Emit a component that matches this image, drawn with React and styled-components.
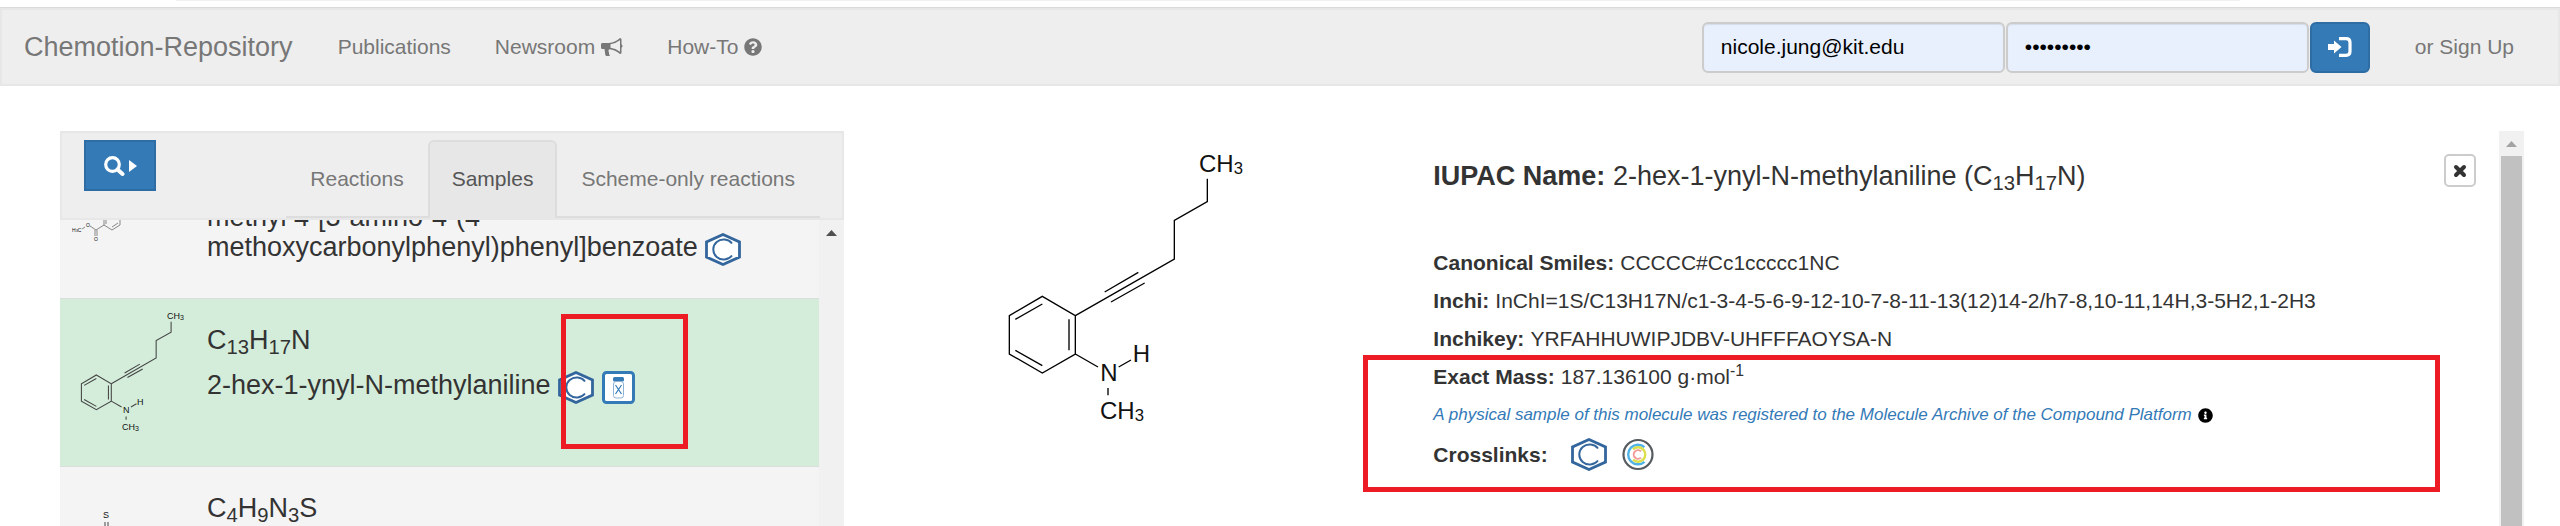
import React, { useLayoutEffect, useRef } from "react";
import styled, { createGlobalStyle } from "styled-components";
import { FaInfoCircle, FaQuestionCircle } from "react-icons/fa";

const GlobalStyle = createGlobalStyle`
  * { box-sizing: border-box; }
  body {
    margin: 0;
    background: #fff;
    color: #333;
    font-family: "Liberation Sans", Arial, sans-serif;
    font-size: 21px;
    line-height: 30px;
  }
  sub, sup { font-size: 75%; line-height: 0; position: relative; vertical-align: baseline; }
  sub { bottom: -0.25em; }
  sup { top: -0.5em; }
`;

const Page = styled.div`
  display: flex;
  flex-direction: column;
  height: 100vh;
  overflow: hidden;
`;

const TopStrip = styled.div`
  flex: none;
  height: 8px;
  padding: 0 320px 0 176px;
  border-bottom: 1px solid #dadada;
  &::before {
    content: "";
    display: block;
    height: 1px;
    background: #f1f1f1;
  }
`;

const Navbar = styled.nav`
  flex: none;
  display: flex;
  align-items: center;
  height: 78px;
  padding: 0 44px 0 22px;
  background: #eee;
  border: 2px solid #e7e7e7;
`;

const NavLink = styled.a`
  display: inline-flex;
  align-items: center;
  gap: 6px;
  color: #777;
  text-decoration: none;
  white-space: nowrap;
  font-size: ${(p) => (p.$brand ? 27 : 21)}px;
`;

const NavLinks = styled.div`
  display: flex;
  gap: 44px;
  margin-left: 45px;
`;

const LoginForm = styled.form`
  display: flex;
  gap: 1px;
  margin: 0 45px 0 auto;
`;

const LoginInput = styled.input`
  width: 303px;
  height: 51px;
  padding: 0 17px;
  border: 2px solid #ccc;
  border-radius: 6px;
  background: #e8f0fe;
  box-shadow: inset 0 1px 1px rgba(0, 0, 0, 0.08);
  color: #000;
  font: 21px "Liberation Sans", Arial, sans-serif;
`;

const PrimaryButton = styled.button`
  display: flex;
  align-items: center;
  justify-content: center;
  gap: 4px;
  width: ${(p) => p.$width}px;
  height: 51px;
  padding: 0;
  border: 2px solid #2e6da4;
  border-radius: ${(p) => (p.$square ? 0 : 6)}px;
  background: #337ab7;
  color: #fff;
`;

const Content = styled.main`
  flex: 1;
  min-height: 0;
  display: grid;
  grid-template-columns: 7fr 15fr;
  grid-template-rows: minmax(0, 1fr);
  padding: 45px 36px 0 60px;
`;

const ListPanel = styled.section`
  display: flex;
  flex-direction: column;
  min-height: 0;
  background: #f4f4f4;
`;

const PanelHeader = styled.header`
  flex: none;
  display: flex;
  justify-content: space-between;
  align-items: flex-start;
  height: 89px;
  padding: 7px 22px 0;
  background: #eee;
  border: 2px solid #e7e7e7;
`;

const Tabs = styled.div`
  display: flex;
  height: 78px;
  padding-right: 1px;
  border-bottom: 2px solid #ddd;
`;

const Tab = styled.button`
  height: 78px;
  padding: 0 22px 2px;
  border: 2px solid ${(p) => (p.$active ? "#ddd" : "transparent")};
  border-bottom: 0;
  border-radius: 6px 6px 0 0;
  background: ${(p) => (p.$active ? "#e7e7e7" : "none")};
  color: ${(p) => (p.$active ? "#555" : "#777")};
  font: 21px "Liberation Sans", Arial, sans-serif;
  white-space: nowrap;
`;

const ScrollArea = styled.div`
  flex: 1;
  min-height: 0;
  display: grid;
  grid-template-columns: minmax(0, 1fr) 25px;
  grid-template-rows: minmax(0, 1fr);
`;

const MoleculeList = styled.ul`
  margin: 0;
  padding: 0;
  overflow: hidden;
  list-style: none;
`;

const MoleculeRow = styled.li`
  display: grid;
  grid-template-columns: 135px minmax(0, 1fr);
  height: 168px;
  padding: 0 60px 0 12px;
  border-top: 1px solid #ddd;
  background: ${(p) => (p.$selected ? "#d4edda" : "#f4f4f4")};
`;

const Thumb = styled.svg`
  display: block;
  width: 135px;
  height: 167px;
  fill: none;
  stroke: #444;
  stroke-width: 1;
  text {
    fill: #111;
    stroke: none;
    font: ${(p) => p.$label || 9}px "Liberation Sans", Arial, sans-serif;
  }
`;

const RowText = styled.div`
  padding-top: 26px;
  font-size: 27px;
  line-height: 30px;
`;

const Formula = styled.div`
  margin-bottom: 15px;
`;

const IconSlot = styled.span`
  position: relative;
  display: inline-flex;
  gap: 8px;
  height: 33px;
  margin: -3px 0 -10px 7px;
  vertical-align: -10px;
`;

const Scrollbar = styled.div`
  display: flex;
  flex-direction: column;
  align-items: center;
  background: #f1f1f1;
`;

const ScrollArrow = styled.svg`
  flex: none;
  display: block;
  width: 25px;
  height: 25px;
  fill: ${(p) => p.$color};
`;

const ScrollThumb = styled.div`
  flex: 1;
  width: 21px;
  background: #c1c1c1;
`;

const Highlight = styled.span`
  position: absolute;
  border: 5px solid #ed1c24;
  pointer-events: none;
`;

const IconHighlight = styled(Highlight)`
  top: -57px;
  left: 3px;
  width: 127px;
  height: 135px;
`;

const DetailHighlight = styled(Highlight)`
  top: -7px;
  left: -70px;
  right: 36px;
  height: 137px;
`;

const DetailPane = styled.section`
  display: grid;
  grid-template-columns: minmax(0, 1fr) 25px;
  grid-template-rows: minmax(0, 1fr);
  min-height: 0;
`;

const Detail = styled.article`
  display: grid;
  grid-template-columns: 13fr 23fr;
  padding-right: 23px;
  overflow: hidden;
`;

const Structure = styled.svg`
  display: block;
  width: 360px;
  height: 340px;
  margin: -11px auto 0;
  fill: none;
  stroke: #000;
  stroke-width: 4;
  text {
    fill: #111;
    stroke: none;
    font: 72px "Liberation Sans", Arial, sans-serif;
  }
`;

const Facts = styled.div`
  padding-top: 23px;
  white-space: nowrap;
`;

const FactsHeader = styled.div`
  display: flex;
  justify-content: space-between;
  align-items: flex-start;
  height: 94px;
`;

const Title = styled.h4`
  margin: 7px 0 0;
  font-size: 27px;
  line-height: 30px;
  font-weight: 400;
`;

const CloseButton = styled.button`
  display: flex;
  align-items: center;
  justify-content: center;
  width: 32px;
  height: 33px;
  padding: 0;
  border: 2px solid #ccc;
  border-radius: 5px;
  background: #fff;
  color: #333;
`;

const Fact = styled.div`
  display: flex;
  align-items: center;
  gap: 6px;
  height: ${(p) => p.$height || 30}px;
  margin-bottom: 8px;
`;

const FactGroup = styled.div`
  position: relative;
`;

const ArchiveLink = styled.a`
  color: #337ab7;
  font-size: 17px;
  font-style: italic;
  text-decoration: none;
`;

const InfoIcon = styled(FaInfoCircle)`
  color: #000;
`;

const Crosslinks = styled.span`
  display: flex;
  gap: 15px;
  margin-left: 17px;
`;

function PubchemHex() {
  return (
    <svg width="36" height="33" viewBox="0 0 36 33" fill="none">
      <path d="M18 1.500 L34.500 9 V24 L18 31.500 L1.500 24 V9 Z" fill="#fff" stroke="#33669c" strokeWidth="2.800" />
      <path d="M27 10.500 A10.400 10 0 1 0 27 22.500" stroke="#33669c" strokeWidth="2" />
    </svg>
  );
}

function VialIcon() {
  return (
    <svg width="33" height="33" viewBox="0 0 33 33" fill="none">
      <rect x="1.500" y="1.500" width="30" height="30" rx="3" fill="#fff" stroke="#337ab7" strokeWidth="3" />
      <rect x="11" y="6" width="11" height="4.500" rx="1.500" fill="#337ab7" />
      <rect x="11.500" y="10.500" width="10" height="16.500" rx="2.500" stroke="#8db4d8" />
      <path d="M13.500 14 L19.500 23 M19.500 14 L13.500 23" stroke="#337ab7" strokeWidth="1.200" />
    </svg>
  );
}

function RingsIcon() {
  return (
    <svg width="32" height="33" viewBox="0 0 32 33" fill="none">
      <circle cx="16" cy="16.500" r="14.500" fill="#fff" stroke="#555b5e" strokeWidth="2.200" />
      <path d="M22.500 9.200 A9.800 9.800 0 1 0 22.500 23.800" stroke="#4fb3e8" strokeWidth="2.400" />
      <path d="M11 11.400 A7.200 7.200 0 1 1 11 21.600" stroke="#dbe04a" strokeWidth="2.400" />
      <path d="M19 13.400 A4.300 4.300 0 1 0 19 19.600" stroke="#f59a9a" strokeWidth="2" />
    </svg>
  );
}

function Bullhorn() {
  return (
    <svg width="22" height="20" viewBox="0 0 22 20" fill="#777">
      <path d="M1 6 Q0 6 0 7.500 V10.500 Q0 12 1.500 12 H3.500 Q4 16 4.500 18.500 Q6 19.500 9 18.800 Q7.500 17 8 15.500 Q6.800 14 8 12.200 Q14.500 12.800 19 17 Q20.500 17 20.500 15.500 V10.700 Q21.500 10 21.500 9 T20.500 7.300 V2.500 Q20.500 1 19 1 Q14 5.600 8 6 Z M19 3.300 V14.700 Q14.500 11.300 9.500 10.800 V7.200 Q14.500 6.700 19 3.300 Z" fillRule="evenodd" />
    </svg>
  );
}

function SignInIcon() {
  return (
    <svg width="24" height="20" viewBox="0 0 24 20">
      <path d="M11 1.700 H18 Q22 1.700 22 5.500 V14.500 Q22 18.300 18 18.300 H11" fill="none" stroke="#fff" strokeWidth="3.200" />
      <path d="M0 7 H6 V3.500 L13.500 10 L6 16.500 V13 H0 Z" fill="#fff" />
    </svg>
  );
}

function SearchIcon() {
  return (
    <svg width="21" height="20" viewBox="0 0 21 20" fill="none" stroke="#fff">
      <circle cx="8.500" cy="8.500" r="6.800" strokeWidth="3.200" />
      <path d="M13.500 13.500 L18.500 18" strokeWidth="4" strokeLinecap="round" />
    </svg>
  );
}

function CloseIcon() {
  return (
    <svg width="14" height="14" viewBox="0 0 14 14" stroke="#333" strokeWidth="4" strokeLinecap="round">
      <path d="M3 3 L11 11 M11 3 L3 11" />
    </svg>
  );
}

/* Bonds of 2-hex-1-ynyl-N-methylaniline on a 1080 x 1020 grid. */
function AnilineDrawing() {
  return (
    <>
      <path d="M745 176 V245 L646 301 V417 L349 587 M437 516 L538 457 M456 546 L557 489" />
      <path d="M250 529 L349 587 V702 L250 759 L151 702 V587 Z M250 552 L169 598 M330 598 V691 M250 737 L169 691" />
      <path d="M349 702 L417 741 M479 741 L516 720 M447 804 V826" />
    </>
  );
}

function MainStructure() {
  return (
    <Structure viewBox="0 0 1080 1020" role="img" aria-label="Structure of 2-hex-1-ynyl-N-methylaniline">
      <AnilineDrawing />
      <text x="720" y="157">CH<tspan dy="5" fontSize="50">3</tspan></text>
      <text x="424" y="782">N</text>
      <text x="521" y="726">H</text>
      <text x="423" y="896">CH<tspan dy="8" fontSize="50">3</tspan></text>
    </Structure>
  );
}

function SelectedThumb() {
  return (
    <Thumb viewBox="72 299 135 167">
      <g transform="translate(58.600 295.100) scale(0.151)" strokeWidth="7">
        <AnilineDrawing />
      </g>
      <text x="167" y="319">CH<tspan dy="1" fontSize="7">3</tspan></text>
      <text x="123" y="413">N</text>
      <text x="137" y="405">H</text>
      <text x="122" y="430">CH<tspan dy="1" fontSize="7">3</tspan></text>
    </Thumb>
  );
}

function BenzoateThumb() {
  return (
    <Thumb $label={5} viewBox="72 131 135 167">
      <path d="M82 229 L85 227 M90 226 L96 230 M95 230 V236 M97 230 V236 M96 230 L104 225 V218 M106 224 V218 M104 225 L112 230 L120 225 V218 M112 227 L118 223" stroke="#888" />
      <text x="72" y="232">H<tspan fontSize="4">3</tspan>C</text>
      <text x="86" y="227">O</text>
      <text x="94" y="241">O</text>
    </Thumb>
  );
}

function ThioThumb() {
  return (
    <Thumb viewBox="72 467 135 167">
      <path d="M105 522 V540 M108 522 V540" />
      <text x="103" y="518">S</text>
    </Thumb>
  );
}

function UpArrow({ color }) {
  return (
    <ScrollArrow $color={color} viewBox="0 0 25 25">
      <path d="M7 16 L12.500 10 L18 16 Z" />
    </ScrollArrow>
  );
}

function SampleList() {
  const list = useRef(null);
  useLayoutEffect(() => {
    list.current.scrollTop = 90;
  }, []);
  return (
    <MoleculeList ref={list}>
      <MoleculeRow>
        <BenzoateThumb />
        <RowText>
          <Formula>C<sub>16</sub>H<sub>15</sub>NO<sub>4</sub></Formula>
          methyl 4-[3-amino-4-(4-<br />
          methoxycarbonylphenyl)phenyl]benzoate
          <IconSlot><PubchemHex /></IconSlot>
        </RowText>
      </MoleculeRow>
      <MoleculeRow $selected>
        <SelectedThumb />
        <RowText>
          <Formula>C<sub>13</sub>H<sub>17</sub>N</Formula>
          2-hex-1-ynyl-N-methylaniline
          <IconSlot>
            <PubchemHex />
            <VialIcon />
            <IconHighlight />
          </IconSlot>
        </RowText>
      </MoleculeRow>
      <MoleculeRow>
        <ThioThumb />
        <RowText>
          <Formula>C<sub>4</sub>H<sub>9</sub>N<sub>3</sub>S</Formula>
        </RowText>
      </MoleculeRow>
    </MoleculeList>
  );
}

export default function App() {
  return (
    <Page>
      <GlobalStyle />
      <TopStrip />
      <Navbar>
        <NavLink $brand href="#home">Chemotion-Repository</NavLink>
        <NavLinks>
          <NavLink href="#publications">Publications</NavLink>
          <NavLink href="#newsroom">Newsroom <Bullhorn /></NavLink>
          <NavLink href="#howto">How-To <FaQuestionCircle size={18} /></NavLink>
        </NavLinks>
        <LoginForm>
          <LoginInput type="email" aria-label="Email" defaultValue="nicole.jung@kit.edu" />
          <LoginInput type="password" aria-label="Password" defaultValue="chemistry" />
          <PrimaryButton $width={60} type="button" aria-label="Log in"><SignInIcon /></PrimaryButton>
        </LoginForm>
        <NavLink href="#signup">or Sign Up</NavLink>
      </Navbar>
      <Content>
        <ListPanel>
          <PanelHeader>
            <PrimaryButton $width={72} $square type="button" aria-label="Search">
              <SearchIcon />
              <svg width="8" height="12" viewBox="0 0 8 12" fill="#fff"><path d="M0 0 L8 6 L0 12 Z" /></svg>
            </PrimaryButton>
            <Tabs role="tablist">
              <Tab role="tab">Reactions</Tab>
              <Tab role="tab" aria-selected="true" $active>Samples</Tab>
              <Tab role="tab">Scheme-only reactions</Tab>
            </Tabs>
          </PanelHeader>
          <ScrollArea>
            <SampleList />
            <Scrollbar><UpArrow color="#505050" /></Scrollbar>
          </ScrollArea>
        </ListPanel>
        <DetailPane>
          <Detail>
            <MainStructure />
            <Facts>
              <FactsHeader>
                <Title><b>IUPAC Name:</b> 2-hex-1-ynyl-N-methylaniline (C<sub>13</sub>H<sub>17</sub>N)</Title>
                <CloseButton type="button" aria-label="Close"><CloseIcon /></CloseButton>
              </FactsHeader>
              <Fact><b>Canonical Smiles:</b> CCCCC#Cc1ccccc1NC</Fact>
              <Fact><b>Inchi:</b> InChI=1S/C13H17N/c1-3-4-5-6-9-12-10-7-8-11-13(12)14-2/h7-8,10-11,14H,3-5H2,1-2H3</Fact>
              <Fact><b>Inchikey:</b> YRFAHHUWIPJDBV-UHFFFAOYSA-N</Fact>
              <FactGroup>
                <Fact><b>Exact Mass:</b> <span>187.136100 g·mol<sup>-1</sup></span></Fact>
                <Fact>
                  <ArchiveLink href="#archive">A physical sample of this molecule was registered to the Molecule Archive of the Compound Platform</ArchiveLink>
                  <InfoIcon size={15} />
                </Fact>
                <Fact $height={33}>
                  <b>Crosslinks:</b>
                  <Crosslinks><PubchemHex /><RingsIcon /></Crosslinks>
                </Fact>
                <DetailHighlight />
              </FactGroup>
            </Facts>
          </Detail>
          <Scrollbar><UpArrow color="#a3a3a3" /><ScrollThumb /></Scrollbar>
        </DetailPane>
      </Content>
    </Page>
  );
}
